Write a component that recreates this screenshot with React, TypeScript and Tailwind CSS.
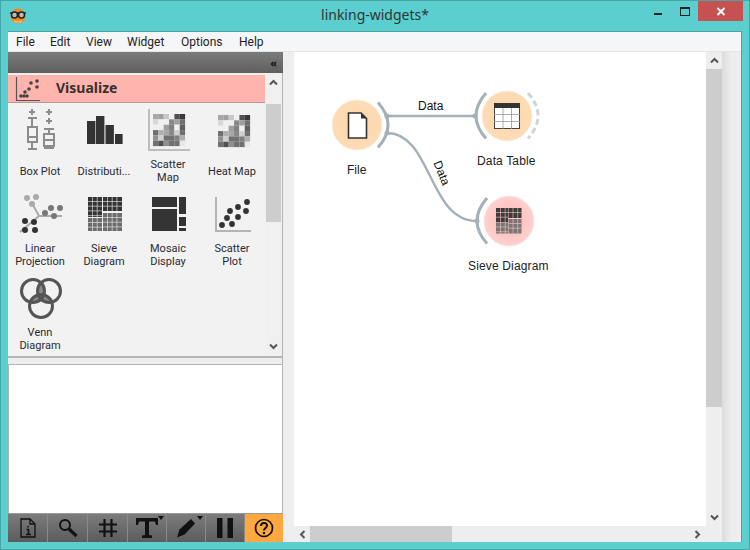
import React from "react";

const ui = { fontFamily: '"Noto Sans", "Open Sans", sans-serif' };
const small = { fontFamily: 'Roboto, "Noto Sans", sans-serif' };
const arial = { fontFamily: '"Liberation Sans", Arial, sans-serif' };

const heat = [
  ["a8", "a0", "c8", "f0", "50", "38"],
  ["d8", "f0", "f0", "88", "a0", "70"],
  ["f0", "f0", "a0", "80", "f0", "60"],
  ["70", "b0", "a8", "88", "d0", "70"],
  ["90", "d0", "70", "70", "80", "b0"],
  ["70", "50", "90", "70", "70", "e8"],
];

function HeatCells({ x, y }: { x: number; y: number }) {
  return (
    <>
      {heat.flatMap((row, r) =>
        row.map((c, i) => (
          <rect key={`${r}-${i}`} x={x + i * 5.35} y={y + r * 5.35} width={5.35} height={5.35} fill={`#${c}${c}${c}`} />
        )),
      )}
    </>
  );
}

function GridBlock({ x, y, w, h, fill, line = "#f2f2f2" }: { x: number; y: number; w: number; h: number; fill: string; line?: string }) {
  const v: number[] = [];
  const hz: number[] = [];
  for (let i = x + 4.5; i < x + w - 1; i += 4.7) v.push(i);
  for (let i = y + 4.5; i < y + h - 1; i += 4.7) hz.push(i);
  return (
    <>
      <rect x={x} y={y} width={w} height={h} fill={fill} />
      {v.map((p) => (
        <line key={`v${p}`} x1={p} x2={p} y1={y} y2={y + h} stroke={line} strokeWidth={0.6} />
      ))}
      {hz.map((p) => (
        <line key={`h${p}`} x1={x} x2={x + w} y1={p} y2={p} stroke={line} strokeWidth={0.6} />
      ))}
    </>
  );
}

function BoxPlot() {
  return (
    <g stroke="#8c8c8c" strokeWidth={2} fill="none">
      <path d="M32 109v6M29 112h6M28 118h9M32 118v9M28 127h9v15h-9zM28 137h9M32 142v7M28 149h9" />
      <path d="M49 109v6M46 112h6M49 118v6M46 121h6M44 129h10M49 129v5M44 134h10v12h-10zM44 140h10M49 146v2M44 148h10" />
    </g>
  );
}

function Distribution() {
  return (
    <g fill="#333">
      <rect x={87} y={121} width={8.4} height={23} />
      <rect x={96} y={116} width={8.4} height={28} />
      <rect x={105.5} y={125} width={8.4} height={19} />
      <rect x={115} y={134} width={7.6} height={10} />
    </g>
  );
}

function Linear() {
  return (
    <>
      <path d="M33 205L39 216H62M39 216L20 232" stroke="#aaa" strokeWidth={2} fill="none" />
      {[[27, 198], [36, 197], [32, 204]].map(([x, y]) => (
        <circle key={`${x}${y}`} cx={x} cy={y} r={3} fill="#aaa" />
      ))}
      {[[45, 213], [51, 208], [60, 208], [54, 216]].map(([x, y]) => (
        <circle key={`${x}${y}`} cx={x} cy={y} r={3} fill="#777" />
      ))}
      {[[25, 221], [34, 222], [25, 230], [35, 230]].map(([x, y]) => (
        <circle key={`${x}${y}`} cx={x} cy={y} r={3} fill="#333" />
      ))}
    </>
  );
}

function Sieve() {
  return (
    <>
      <GridBlock x={88} y={197} w={14} h={20} fill="#333" />
      <GridBlock x={103} y={197} w={19} h={14} fill="#333" />
      <GridBlock x={88} y={218} w={14} h={13} fill="#6c6c6c" />
      <GridBlock x={103} y={213} w={19} h={18} fill="#6c6c6c" />
    </>
  );
}

function Mosaic() {
  return (
    <g fill="#333">
      <rect x={152} y={197} width={25} height={10} />
      <rect x={152} y={209} width={25} height={22} />
      <rect x={179} y={197} width={7} height={17} />
      <rect x={179} y={217} width={7} height={9} />
      <rect x={179} y={228} width={7} height={3} />
    </g>
  );
}

function ScatterPlot() {
  return (
    <>
      <path d="M216 197V231H251" stroke="#b4b4b4" strokeWidth={2} fill="none" />
      {[[222, 225], [227, 218], [232, 224], [230, 211], [238, 207], [238, 217], [246, 211], [247, 202]].map(([x, y]) => (
        <circle key={`${x}${y}`} cx={x} cy={y} r={2.9} fill="#333" />
      ))}
    </>
  );
}

function Venn() {
  return (
    <>
      <defs>
        <clipPath id="va"><circle cx={33} cy={291} r={12} /></clipPath>
        <clipPath id="vb"><circle cx={49} cy={291} r={12} /></clipPath>
      </defs>
      <g clipPath="url(#va)"><circle cx={49} cy={291} r={12} fill="#8a8a8a" /></g>
      <g clipPath="url(#va)"><circle cx={41} cy={306} r={12} fill="#8a8a8a" /></g>
      <g clipPath="url(#vb)"><circle cx={41} cy={306} r={12} fill="#8a8a8a" /></g>
      <g stroke="#555" strokeWidth={3} fill="none">
        <circle cx={33} cy={291} r={11.5} />
        <circle cx={49} cy={291} r={11.5} />
        <circle cx={41} cy={306} r={11.5} />
      </g>
    </>
  );
}

function ScatterMap() {
  return (
    <>
      <path d="M149 109V150H190" stroke="#bdbdbd" strokeWidth={2} fill="none" />
      <HeatCells x={153} y={114} />
    </>
  );
}

function HeatMap() {
  return <HeatCells x={218} y={115} />;
}

const tools: { label: string[]; vx: number; vy: number; icon: React.ReactNode }[] = [
  { label: ["Box Plot"], vx: 8, vy: 104, icon: <BoxPlot /> },
  { label: ["Distributi..."], vx: 72, vy: 104, icon: <Distribution /> },
  { label: ["Scatter", "Map"], vx: 136, vy: 104, icon: <ScatterMap /> },
  { label: ["Heat Map"], vx: 200, vy: 104, icon: <HeatMap /> },
  { label: ["Linear", "Projection"], vx: 8, vy: 188, icon: <Linear /> },
  { label: ["Sieve", "Diagram"], vx: 72, vy: 188, icon: <Sieve /> },
  { label: ["Mosaic", "Display"], vx: 136, vy: 188, icon: <Mosaic /> },
  { label: ["Scatter", "Plot"], vx: 200, vy: 188, icon: <ScatterPlot /> },
  { label: ["Venn", "Diagram"], vx: 8, vy: 272, icon: <Venn /> },
];

function Chevron({ dir }: { dir: "up" | "down" | "left" | "right" }) {
  const rot = { up: 0, down: 180, left: -90, right: 90 }[dir];
  return (
    <svg width="9" height="7" viewBox="0 0 9 7" style={{ transform: `rotate(${rot}deg)` }}>
      <path d="M1 5.5L4.5 2L8 5.5" stroke="#555" strokeWidth={2} fill="none" />
    </svg>
  );
}

function ToolBtn({ children, active, caret, w }: { children: React.ReactNode; active?: boolean; caret?: boolean; w: string }) {
  return (
    <div
      className={`relative flex h-full items-center justify-center border-r border-[#8a8a8a] ${w} ${
        active ? "bg-[#ffa840] border-r-0" : "bg-gradient-to-b from-[#7c7c7c] to-[#5c5c5c]"
      }`}
    >
      {children}
      {caret && <span className="absolute right-[2px] top-[2px] h-0 w-0 border-x-[3px] border-t-[4px] border-x-transparent border-t-[#111]" />}
    </div>
  );
}

export default function App() {
  return (
    <div className="flex h-[550px] w-[750px] flex-col overflow-hidden border border-[#47a5a5] bg-[#5bcfcf]" style={ui}>
      {/* title bar */}
      <div className="flex h-[30px] shrink-0 items-start">
        <svg width="18" height="18" viewBox="0 0 18 18" className="ml-[8px] mt-[6px] shrink-0">
          <circle cx="9" cy="9" r="7.5" fill="#f08a24" />
          <path d="M5 14c2.500 1.500 5.500 1.500 8 0" stroke="#f9c27e" strokeWidth="1.300" fill="none" />
          <path d="M1 6h16" stroke="#222" strokeWidth="1.400" />
          <circle cx="5.500" cy="8" r="3" fill="#bbb" stroke="#222" strokeWidth="1.500" />
          <circle cx="12.500" cy="8" r="3" fill="#bbb" stroke="#222" strokeWidth="1.500" />
        </svg>
        <div className="ml-[285px] mt-[4px] w-[126px] text-center text-[14px] leading-[20px] text-[#333]">linking-widgets*</div>
        <div className="ml-auto flex items-start">
          <div className="mt-[12px] h-[2px] w-[8px] bg-[#222]" />
          <div className="ml-[18px] mt-[6px] h-[9px] w-[10px] border border-t-[2px] border-[#222]" />
          <div className="ml-[8px] mr-[6px] flex h-[20px] w-[45px] items-center justify-center bg-[#c75050]">
            <svg width="10" height="9" viewBox="0 0 10 9">
              <path d="M1.5 1L8.5 8M8.5 1L1.5 8" stroke="#fff" strokeWidth="2" />
            </svg>
          </div>
        </div>
      </div>

      {/* window body */}
      <div className="ml-[7px] mr-[7px] flex h-[511px] shrink-0 flex-col border-r border-[#47a5a5] bg-[#eeeeee]">
        {/* menu */}
        <div
          className="flex h-[21px] shrink-0 items-center border-t border-b border-t-[#47a5a5] border-b-[#e6e6e6] bg-[#f5f6f7] pl-[8px] text-[12px] leading-[16px] text-[#222]"
          style={small}
        >
          <span className="w-[34px]">File</span>
          <span className="w-[36px]">Edit</span>
          <span className="w-[41px]">View</span>
          <span className="w-[54px]">Widget</span>
          <span className="w-[58px]">Options</span>
          <span>Help</span>
        </div>

        <div className="flex min-h-0 flex-1">
          {/* dock */}
          <div className="flex w-[275px] shrink-0 flex-col">
            <div className="flex h-[21px] shrink-0 items-center justify-end bg-gradient-to-b from-[#7b7b7b] to-[#5f5f5f] pr-[6px] text-[11px] font-bold leading-none text-[#111]">
              «
            </div>
            <div className="flex h-[283px] shrink-0 border-r border-[#b4b4b4] pt-[2px]">
              <div className="flex w-[257px] shrink-0 flex-col bg-[#f2f2f2]">
                <div className="flex h-[28px] shrink-0 items-center border-b border-[#b89a98] bg-[#ffb5ae] pl-[7px]">
                  <svg width="26" height="26" viewBox="15 75 26 26">
                    <path d="M16.5 76V99.5H40" stroke="#555" strokeWidth="1.2" fill="none" />
                    {[[21, 95], [25, 91], [27, 95], [29, 88], [31, 82], [37, 80], [37, 86], [24, 95]].map(([x, y]) => (
                      <circle key={`${x}${y}`} cx={x} cy={y} r={1.8} fill="#444" />
                    ))}
                  </svg>
                  <span className="mb-[1px] ml-[15px] text-[14px] font-bold leading-[20px] text-[#3a3030]">Visualize</span>
                </div>
                <div className="grid grid-cols-[repeat(4,64px)] auto-rows-[84px]">
                  {tools.map((t) => (
                    <div key={t.label.join(" ")} className="flex flex-col items-center">
                      <svg width="64" height="50" viewBox={`${t.vx} ${t.vy} 64 50`} className="mt-[1px] shrink-0">
                        {t.icon}
                      </svg>
                      <div
                        className="mt-[2px] flex h-[30px] flex-col justify-center text-center text-[11px] leading-[13px] text-[#2a2a33]"
                        style={small}
                      >
                        {t.label.map((l) => (
                          <span key={l}>{l}</span>
                        ))}
                      </div>
                    </div>
                  ))}
                </div>
              </div>
              <div className="flex flex-1 flex-col items-center bg-[#f0f0f0]">
                <div className="flex h-[29px] w-full shrink-0 items-start justify-center pt-[4px]">
                  <Chevron dir="up" />
                </div>
                <div className="h-[118px] w-[15px] shrink-0 bg-[#cdcdcd]" />
                <div className="mt-auto flex h-[16px] items-start justify-center pt-[3px]">
                  <Chevron dir="down" />
                </div>
              </div>
            </div>
            <div className="h-[8px] shrink-0 border-t-[2px] border-r border-[#b4b4b4]" />
            <div className="min-h-0 flex-1 border-x border-t border-[#b4b4b4] bg-white" />
            <div className="flex h-[29px] shrink-0 items-stretch border-t border-[#9a9a9a]">
              <ToolBtn w="w-[40px]">
                <svg width="16" height="20" viewBox="0 0 16 20" fill="none" stroke="#111" strokeWidth="1.3">
                  <path d="M1 1h9l5 5v13H1zM10 1v5h5" />
                  <path d="M8 8v1.5M6.5 11.5H8.5V16M6 16.5h5" strokeWidth="1.6" />
                </svg>
              </ToolBtn>
              <ToolBtn w="w-[40px]">
                <svg width="20" height="20" viewBox="0 0 20 20" fill="none" stroke="#111">
                  <circle cx="7" cy="7" r="5" strokeWidth="2" />
                  <path d="M11 11l7.5 7" strokeWidth="3.2" />
                </svg>
              </ToolBtn>
              <ToolBtn w="w-[40px]">
                <svg width="20" height="20" viewBox="0 0 20 20" stroke="#111" strokeWidth="2.2">
                  <path d="M6.5 1v18M13.5 1v18M1 6.5h18M1 13.5h18" />
                </svg>
              </ToolBtn>
              <ToolBtn w="w-[39px]" caret>
                <svg width="24" height="22" viewBox="0 0 24 22" fill="#111">
                  <path d="M1 1h22v7h-2l-1-3.5h-6v13.5l3 .5v2.500H7v-2.500l3-.5V4.500H4L3 8H1z" />
                </svg>
              </ToolBtn>
              <ToolBtn w="w-[39px]" caret>
                <svg width="20" height="20" viewBox="0 0 20 20" fill="#111">
                  <path d="M1 19.500l2.500-8L15 1l4 4.500-10.500 11z" />
                </svg>
              </ToolBtn>
              <ToolBtn w="w-[39px]">
                <svg width="16" height="20" viewBox="0 0 16 20" fill="#111">
                  <rect x="0" y="0" width="5.5" height="20" />
                  <rect x="10.500" y="0" width="5.5" height="20" />
                </svg>
              </ToolBtn>
              <ToolBtn w="flex-1" active>
                <svg width="20" height="20" viewBox="0 0 20 20" fill="none" stroke="#111">
                  <circle cx="10" cy="10" r="8.5" strokeWidth="1.7" />
                  <path d="M7 8c0-4 6-4 6-.5 0 2.500-3 2.500-3 5" strokeWidth="2" />
                  <circle cx="10" cy="15" r="1.2" fill="#111" stroke="none" />
                </svg>
              </ToolBtn>
            </div>
          </div>

          {/* canvas area */}
          <div className="ml-[11px] grid h-full w-[428px] shrink-0 grid-cols-[412px_16px] grid-rows-[474px_16px]">
            <div className="relative overflow-hidden bg-white" style={arial}>
              <svg width="412" height="474" className="absolute left-0 top-0" viewBox="294 52 412 474">
                <defs>
                  <radialGradient id="orange">
                    <stop offset="0.55" stopColor="#ffd9ae" />
                    <stop offset="1" stopColor="#fbdcb8" />
                  </radialGradient>
                  <radialGradient id="pink">
                    <stop offset="0.55" stopColor="#ffc4c0" />
                    <stop offset="1" stopColor="#fdd2cf" />
                  </radialGradient>
                </defs>
                <g fill="none" stroke="#a3b1b8" strokeWidth={2.4}>
                  <path d="M387 116H475" />
                  <path d="M387 133C432 133 428 221 477 221" />
                  <path d="M378 102.500Q398 125 378 147.500" strokeWidth={3} />
                  <path d="M486 93Q466 116 486 138.500" strokeWidth={3} />
                  <path d="M487 198Q467 221 487 243.500" strokeWidth={3} />
                  <path d="M528 93Q548 116 528 138.500" strokeWidth={3} strokeDasharray="6 3.500" stroke="#cdd5d9" />
                </g>
                <g fill="#a3b1b8">
                  <circle cx={387} cy={116} r={2.5} />
                  <circle cx={387} cy={133} r={2.5} />
                  <circle cx={475} cy={116} r={2.5} />
                  <circle cx={477} cy={221} r={2.5} />
                </g>
                <circle cx={357} cy={125} r={25} fill="url(#orange)" stroke="#ffeeda" strokeWidth={1} />
                <circle cx={507} cy={116} r={25} fill="url(#orange)" stroke="#ffeeda" strokeWidth={1} />
                <circle cx={509} cy={221} r={25} fill="url(#pink)" stroke="#ffe6e4" strokeWidth={1} />
                <path d="M348.500 113H361L366.500 118.500V138H348.500Z" fill="#fff" stroke="#333" strokeWidth={1.6} />
                <path d="M361 112.500L366.800 118.500H361Z" fill="#333" />
                <rect x={494.500} y={103.500} width={25} height={25} fill="#fff" stroke="#444" />
                <path d="M503 108V129M511.500 108V129M494 114.500H520M494 121.500H520" stroke="#999" strokeWidth={0.8} />
                <rect x={494} y={103} width={26} height={5} fill="#333" />
                <GridBlock x={496} y={208} w={12} h={14} fill="#3c3c3c" line="#ffc4c0" />
                <GridBlock x={508.500} y={208} w={13} h={10} fill="#3c3c3c" line="#ffc4c0" />
                <GridBlock x={496} y={222.500} w={12} h={11} fill="#777" line="#ffc4c0" />
                <GridBlock x={508.500} y={219} w={13} h={14.500} fill="#777" line="#ffc4c0" />
              </svg>
              <span className="absolute left-[124px] top-[47px] text-[12px] leading-[14px] text-[#111]">Data</span>
              <span className="absolute left-[135px] top-[114px] rotate-[68deg] text-[12px] leading-[14px] text-[#111]">Data</span>
              <span className="absolute left-[53px] top-[111px] text-[12px] leading-[14px] text-[#222]">File</span>
              <span className="absolute left-[183px] top-[102px] text-[12px] leading-[14px] tracking-[0.15px] text-[#222]">Data Table</span>
              <span className="absolute left-[174px] top-[207px] text-[12px] leading-[14px] tracking-[0.15px] text-[#222]">Sieve Diagram</span>
            </div>
            <div className="flex flex-col items-center bg-[#eeeeee]">
              <div className="flex h-[17px] items-center">
                <Chevron dir="up" />
              </div>
              <div className="h-[338px] w-[16px] bg-[#cdcdcd]" />
              <div className="mt-auto flex h-[17px] items-center">
                <Chevron dir="down" />
              </div>
            </div>
            <div className="flex items-center bg-[#eeeeee]">
              <div className="flex w-[16px] justify-center">
                <Chevron dir="left" />
              </div>
              <div className="h-[16px] w-[142px] bg-[#cdcdcd]" />
              <div className="ml-auto flex w-[17px] justify-center">
                <Chevron dir="right" />
              </div>
            </div>
            <div className="bg-[#eeeeee]" />
          </div>
          <div className="flex-1 bg-gradient-to-r from-[#dcdcdc] via-[#eeeeee] to-[#eeeeee]" />
        </div>
      </div>
    </div>
  );
}
